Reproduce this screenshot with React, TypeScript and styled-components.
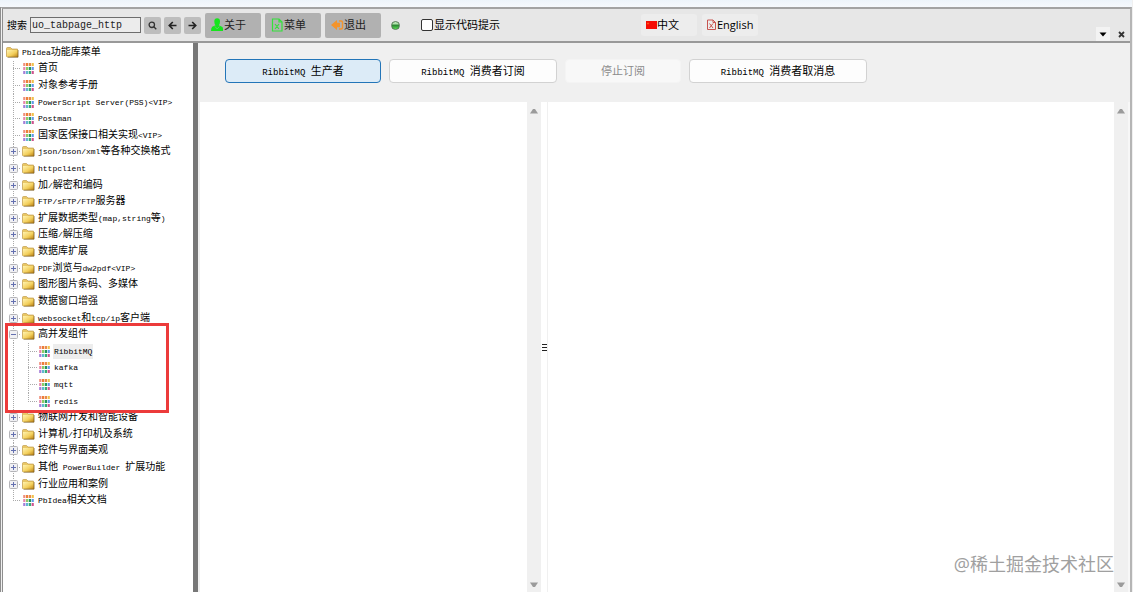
import React from 'react';
import styled, { createGlobalStyle, css } from 'styled-components';

const sans = '"Open Sans", "Noto Sans CJK SC", sans-serif';
const mono = '"Liberation Mono", "Noto Sans CJK SC", monospace';

const GlobalStyle = createGlobalStyle`
  *, *::before, *::after { box-sizing: border-box; }
  body { margin: 0; background: #f0f0f0; color: #000; font: 11px/16px ${sans}; }
  button, input { font: inherit; color: inherit; margin: 0; }
  button { padding: 0; border: 0; white-space: nowrap; }
  svg { display: block; flex: none; }
`;

const Window = styled.div`
  position: relative;
  display: flex;
  flex-direction: column;
  min-height: 100vh;
  padding-right: 1px;
  background: #f0f0f0;
  overflow: hidden;
`;

const TitleStrip = styled.div`
  height: 7px;
  background: linear-gradient(#edf4fa, #f6f9fd);
`;

const Frame = styled.div`
  flex: 1;
  display: flex;
  flex-direction: column;
  border-top: 2px solid #a3a3a3;
  border-left: 3px double #8e8e8e;
  border-right: 2px solid #b5b5b5;
`;

const Toolbar = styled.header`
  display: flex;
  align-items: center;
  height: 34px;
  padding-left: 4px;
  background: #e7e7e7;
  border-bottom: 2px solid #999;
`;

const Search = styled.form`
  display: flex;
  align-items: center;
  gap: 3px;
  label { font-size: 10px; }
`;

const SearchInput = styled.input`
  width: 111px;
  height: 16px;
  padding: 0 1px;
  border: 1px solid #6d6d6d;
  border-radius: 0;
  background: #ececec;
  color: #222;
  font: 10px/14px ${mono};
  outline: 0;
`;

const SquareButton = styled.button`
  display: grid;
  place-items: center;
  width: 17px;
  height: 17px;
  border-radius: 2px;
  background: #bdbdbd;
`;

const Actions = styled.div`
  display: flex;
  gap: 4px;
  margin-left: 4px;
`;

const ActionButton = styled.button`
  display: flex;
  align-items: center;
  width: 56px;
  height: 25px;
  padding-left: 6px;
  border-radius: 2px;
  background: #b1b1b1;
  color: #222;
`;

const Status = styled.span`
  width: 9px;
  height: 9px;
  margin: 0 21px 0 10px;
  border-radius: 50%;
  border: 1px solid #557a55;
  background: linear-gradient(#b9e6b4 0 20%, #2f8a35 50%, #55e04f);
`;

const Hint = styled.label`
  display: flex;
  align-items: center;
  gap: 1px;
  white-space: nowrap;
  input {
    appearance: none;
    width: 12px;
    height: 12px;
    border: 1px solid #333;
    border-radius: 2px;
    background: #fff;
  }
  input:checked { background: #2270b5; }
`;

const Languages = styled.div`
  display: flex;
  gap: 5px;
  margin-left: 141px;
`;

const LanguageButton = styled.button`
  display: flex;
  align-items: center;
  width: 56px;
  height: 22px;
  padding-left: 5px;
  border-radius: 3px;
  background: #ededed;
`;

const PaneControls = styled.div`
  display: flex;
  align-self: flex-end;
  gap: 4px;
  margin-left: auto;
  padding-right: 2px;
`;

const PaneButton = styled.button<{ $lit?: boolean }>`
  display: grid;
  place-items: center;
  width: 14px;
  height: 14px;
  background: ${p => (p.$lit ? '#f3f3f3' : 'transparent')};
`;

const Body = styled.div`
  flex: 1;
  display: flex;
`;

const Sidebar = styled.nav`
  flex: none;
  width: 195px;
  padding-top: 1px;
  background: #fff;
  border-right: 5px solid #777;
`;

const Tree = styled.div`
  position: relative;
  display: grid;
  grid-template-rows: repeat(28, 1fr);
  height: 465px;
`;

const TreeRow = styled.div`
  display: flex;
  align-items: center;
  min-height: 0;
  padding-left: 1px;
`;

type Trunk = 'full' | 'half' | 'none';

const Branch = styled.span<{ $trunk: Trunk; $at: number; $arm: boolean; $width: number }>`
  align-self: stretch;
  display: flex;
  align-items: center;
  flex: none;
  width: ${p => p.$width}px;
  padding-left: ${p => p.$at - 4}px;
  background-repeat: no-repeat;
  ${p => css`
    background-image:
      repeating-linear-gradient(#aaa 0 1px, transparent 1px 2px),
      repeating-linear-gradient(90deg, #aaa 0 1px, transparent 1px 2px);
    background-position: ${p.$at}px 0, ${p.$at}px 50%;
    background-size:
      ${p.$trunk === 'none' ? '0 0' : p.$trunk === 'half' ? '1px 50%' : '1px 100%'},
      ${p.$arm ? `${p.$width - p.$at - 1}px 1px` : '0 0'};
  `}
`;

const IconCell = styled.span<{ $indent?: boolean }>`
  display: flex;
  flex: none;
  justify-content: center;
  width: 13px;
  margin-left: ${p => (p.$indent ? 2 : 0)}px;
`;

const Label = styled.span<{ $selected?: boolean }>`
  display: flex;
  align-items: center;
  height: 15px;
  margin-left: 2px;
  padding: 0 1px;
  font: 10px/15px ${mono};
  white-space: pre;
  background: ${p => (p.$selected ? '#ededed' : 'transparent')};
`;

const Latin = styled.span`
  font-size: 8px;
`;

const GroupOutline = styled.div`
  position: absolute;
  grid-row: 18 / span 5;
  inset: -3px 24px -4px 2px;
  border: 3px solid #ec3b3b;
`;

const Workspace = styled.main`
  flex: 1;
  min-width: 0;
  display: flex;
  flex-direction: column;
  padding-left: 2px;
`;

const Commands = styled.div`
  display: flex;
  gap: 8px;
  padding: 16px 25px 19px;
`;

const CommandButton = styled.button<{ $width: number; $primary?: boolean }>`
  width: ${p => p.$width}px;
  height: 24px;
  padding-top: 2px;
  border: 1px solid ${p => (p.$primary ? '#2375b8' : '#d2d2d2')};
  border-radius: 4px;
  background: ${p => (p.$primary ? '#dcebf7' : '#fdfdfd')};
  font: 11px/20px ${mono};
  &:disabled { color: #8b8b8b; background: #f8f8f8; border-color: #f4f4f4; }
`;

const CommandLatin = styled.span`
  font-size: 9px;
`;

const Panels = styled.div`
  flex: 1;
  display: flex;
  background: #fff;
`;

const Panel = styled.section<{ $grow: number }>`
  flex: ${p => p.$grow} 1 0;
  display: flex;
  justify-content: flex-end;
`;

const ScrollTrack = styled.div`
  display: flex;
  flex-direction: column;
  align-items: center;
  justify-content: space-between;
  width: 14px;
  padding: 6px 0 4px;
  background: #f0f0f0;
`;

const Splitter = styled.div`
  display: grid;
  place-items: center;
  width: 7px;
  border-right: 1px solid #f0f0f0;
`;

const Gutter = styled.div`
  width: 2px;
  background: #f7f7f7;
`;

const Watermark = styled.div`
  position: absolute;
  right: 19px;
  bottom: 15px;
  font: 18px/26px ${sans};
  color: #a0a0a0;
`;

const Folder = () => (
  <svg width="13" height="11" viewBox="0 0 13 11">
    <defs>
      <linearGradient id="folderFace" x1="0" y1="0" x2="1" y2="1">
        <stop offset="0" stopColor="#fff3b0" />
        <stop offset=".55" stopColor="#f3cf5c" />
        <stop offset="1" stopColor="#b87d10" />
      </linearGradient>
    </defs>
    <path d="M.5 9.5V1.5Q.5.5 1.5.5H4.5L6 2H11.5V9.5Z" fill="#e9c765" stroke="#b8903a" strokeWidth=".6" />
    <path d="M1 3H12V10H1Z" fill="url(#folderFace)" />
    <path d="M12 3V10.2H1.5" fill="none" stroke="#7d5e20" strokeWidth=".8" />
  </svg>
);

const tileColors = [
  '#ef8f7c', '#ec7f3a', '#e98a4a', '#f0c04a',
  '#e985ab', '#8ccc66', '#22985a', '#6099e6',
  '#a57dd8', '#62b8d0', '#35ad75', '#cc5590',
];

const Tiles = () => (
  <svg width="11" height="11" viewBox="0 0 11 11">
    {tileColors.map((c, i) => (
      <rect key={i} x={(i % 4) * 2.8 + 0.2} y={Math.floor(i / 4) * 4} width="2.2" height="3" fill={c} />
    ))}
  </svg>
);

const Toggle = ({ open }: { open?: boolean }) => (
  <svg width="9" height="9" viewBox="0 0 9 9">
    <rect x=".5" y=".5" width="8" height="8" rx="1" fill="#f0f0f3" stroke="#b4b4b8" />
    <path d={open ? 'M2 4.5H7' : 'M2 4.5H7M4.5 2V7'} stroke="#6470b0" />
  </svg>
);

const Caret = ({ down }: { down?: boolean }) => (
  <svg width="8" height="6" viewBox="0 0 8 6">
    <path d={down ? 'M0 .5H8L5 5H3Z' : 'M0 5.5H8L5 1H3Z'} fill="#9b9b9b" />
  </svg>
);

type Node = { text: string; kind: 'root' | 'leaf' | 'folder' | 'open' | 'child'; last?: boolean };

const folder = (text: string): Node => ({ text, kind: 'folder' });
const leaf = (text: string, last = false): Node => ({ text, kind: 'leaf', last });
const child = (text: string, last = false): Node => ({ text, kind: 'child', last });

const nodes: Node[] = [
  { text: 'PbIdea功能库菜单', kind: 'root' },
  leaf('首页'),
  leaf('对象参考手册'),
  leaf('PowerScript Server(PSS)<VIP>'),
  leaf('Postman'),
  leaf('国家医保接口相关实现<VIP>'),
  folder('json/bson/xml等各种交换格式'),
  folder('httpclient'),
  folder('加/解密和编码'),
  folder('FTP/sFTP/FTP服务器'),
  folder('扩展数据类型(map,string等)'),
  folder('压缩/解压缩'),
  folder('数据库扩展'),
  folder('PDF浏览与dw2pdf<VIP>'),
  folder('图形图片条码、多媒体'),
  folder('数据窗口增强'),
  folder('websocket和tcp/ip客户端'),
  { text: '高并发组件', kind: 'open' },
  child('RibbitMQ'),
  child('kafka'),
  child('mqtt'),
  child('redis', true),
  folder('物联网开发和智能设备'),
  folder('计算机/打印机及系统'),
  folder('控件与界面美观'),
  folder('其他 PowerBuilder 扩展功能'),
  folder('行业应用和案例'),
  leaf('PbIdea相关文档', true),
];

const mixed = (text: string, Run: React.ElementType) =>
  text.split(/([\x20-\x7e]+)/).map((part, i) => (i % 2 ? <Run key={i}>{part}</Run> : part));

const levels = { root: 1, leaf: 2, folder: 2, open: 2, child: 3 };

const TreeItem = ({ node }: { node: Node }) => {
  const { kind, text, last } = node;
  const isRoot = kind === 'root';
  const isFolder = kind === 'folder' || kind === 'open';
  const selected = text === 'RibbitMQ';
  return (
    <TreeRow
      role="treeitem"
      aria-level={levels[kind]}
      aria-selected={selected}
      aria-expanded={kind === 'open' || isRoot ? true : kind === 'folder' ? false : undefined}
    >
      {!isRoot && (
        <Branch $width={18} $at={9} $trunk={last && kind === 'leaf' ? 'half' : 'full'} $arm={kind !== 'child'}>
          {isFolder && <Toggle open={kind === 'open'} />}
        </Branch>
      )}
      {kind === 'child' && <Branch $width={16} $at={6} $trunk={last ? 'half' : 'full'} $arm />}
      <IconCell $indent={isRoot}>{isFolder || isRoot ? <Folder /> : <Tiles />}</IconCell>
      <Label $selected={selected}>{mixed(text, Latin)}</Label>
    </TreeRow>
  );
};

export default function App() {
  return (
    <>
      <GlobalStyle />
      <Window>
        <TitleStrip />
        <Frame>
          <Toolbar>
            <Search onSubmit={e => e.preventDefault()}>
              <label htmlFor="search">搜索</label>
              <SearchInput id="search" defaultValue="uo_tabpage_http" />
              <SquareButton type="submit" aria-label="搜索">
                <svg width="9" height="9" viewBox="0 0 9 9" fill="none" stroke="#333" strokeWidth="1.3">
                  <circle cx="3.8" cy="3.8" r="2.7" />
                  <path d="M5.8 5.8L8.3 8.3" />
                </svg>
              </SquareButton>
              <SquareButton type="button" aria-label="后退">
                <svg width="9" height="9" viewBox="0 0 9 9" fill="none" stroke="#222" strokeWidth="1.7">
                  <path d="M8.5 4.5H1.5M4.8 1L1.3 4.5L4.8 8" />
                </svg>
              </SquareButton>
              <SquareButton type="button" aria-label="前进">
                <svg width="9" height="9" viewBox="0 0 9 9" fill="none" stroke="#222" strokeWidth="1.7">
                  <path d="M.5 4.5H7.5M4.2 1L7.7 4.5L4.2 8" />
                </svg>
              </SquareButton>
            </Search>
            <Actions>
              <ActionButton type="button">
                <svg width="13" height="14" viewBox="0 0 13 14">
                  <path d="M3.3 3.5A2.7 3 0 0 1 9 3.5Q9 6 7.8 7.2L11.5 9Q12.3 10.5 12 13H0Q0 10 1.2 8.8L4.5 7.2Q3.3 6 3.3 3.5Z" fill="#16e51d" />
                  <path d="M4 8.5L6.2 11L8.4 8.5" fill="none" stroke="#72c875" strokeWidth=".8" />
                </svg>
                关于
              </ActionButton>
              <ActionButton type="button">
                <svg width="13" height="14" viewBox="0 0 13 14" fill="none" stroke="#35e23c" strokeWidth="1.2">
                  <path d="M1.5 1H8L11 4V13H1.5ZM8 1V4H11M4 6L8 11M8 6L4 11" />
                </svg>
                菜单
              </ActionButton>
              <ActionButton type="button">
                <svg width="13" height="14" viewBox="0 0 13 14">
                  <path d="M0 7L6 2V4.7H9V9.3H6V12Z" fill="#f4942b" />
                  <path d="M8 3H10Q11.5 3 11.5 4.5V9.5Q11.5 11 10 11H8" fill="none" stroke="#f4942b" strokeWidth="1.4" />
                </svg>
                退出
              </ActionButton>
            </Actions>
            <Status role="img" aria-label="在线" />
            <Hint>
              <input type="checkbox" />
              显示代码提示
            </Hint>
            <Languages>
              <LanguageButton type="button">
                <svg width="11" height="8" viewBox="0 0 11 8">
                  <path d="M0 0H11V8H0Z" fill="#f50d05" />
                  <path d="M2 1L2.4 2H3.4L2.6 2.6L3 3.6L2 3L1 3.6L1.4 2.6L.6 2H1.6Z" fill="#ff6a1d" />
                </svg>
                中文
              </LanguageButton>
              <LanguageButton type="button">
                <svg width="10" height="12" viewBox="0 0 10 12" fill="none" stroke="#c75450">
                  <path d="M.5 1H6L8.5 3.5V10.5H.5ZM6 1V3.5H8.5M2.5 4.5L6 9M6 4.5L2.5 9" />
                </svg>
                English
              </LanguageButton>
            </Languages>
            <PaneControls>
              <PaneButton type="button" $lit aria-label="展开">
                <svg width="8" height="5" viewBox="0 0 8 5"><path d="M.5 .5H7.5L4 4.5Z" fill="#000" /></svg>
              </PaneButton>
              <PaneButton type="button" aria-label="关闭">
                <svg width="7" height="7" viewBox="0 0 7 7"><path d="M1 1L6 6M6 1L1 6" stroke="#333" strokeWidth="1.8" /></svg>
              </PaneButton>
            </PaneControls>
          </Toolbar>
          <Body>
            <Sidebar>
              <Tree role="tree">
                {nodes.map(n => <TreeItem key={n.text} node={n} />)}
                <GroupOutline />
              </Tree>
            </Sidebar>
            <Workspace>
              <Commands>
                <CommandButton $width={156} $primary>{mixed('RibbitMQ 生产者', CommandLatin)}</CommandButton>
                <CommandButton $width={168}>{mixed('RibbitMQ 消费者订阅', CommandLatin)}</CommandButton>
                <CommandButton $width={116} disabled>停止订阅</CommandButton>
                <CommandButton $width={178}>{mixed('RibbitMQ 消费者取消息', CommandLatin)}</CommandButton>
              </Commands>
              <Panels>
                <Panel $grow={341}>
                  <ScrollTrack><Caret /><Caret down /></ScrollTrack>
                </Panel>
                <Splitter>
                  <svg width="5" height="8" viewBox="0 0 5 8"><path d="M0 1.5H5M0 4.5H5M0 7.5H5" stroke="#222" /></svg>
                </Splitter>
                <Panel $grow={580}>
                  <ScrollTrack><Caret /><Caret down /></ScrollTrack>
                </Panel>
                <Gutter />
              </Panels>
            </Workspace>
          </Body>
        </Frame>
        <Watermark>@稀土掘金技术社区</Watermark>
      </Window>
    </>
  );
}
